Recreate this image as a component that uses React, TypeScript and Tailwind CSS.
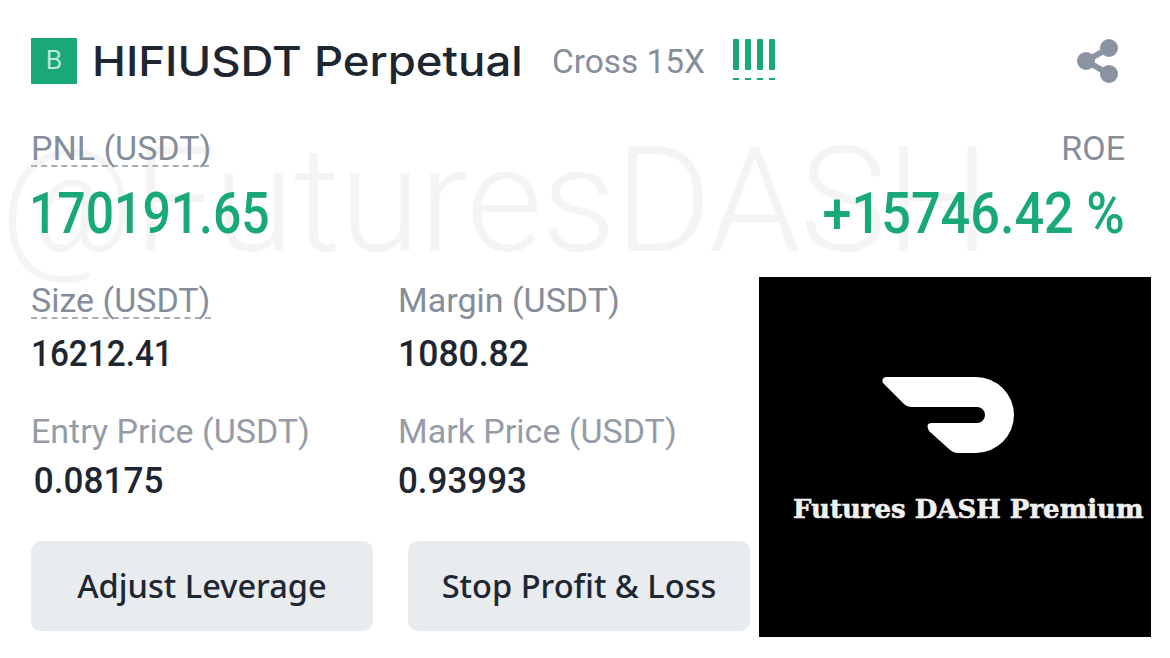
export default function App() {
  const din = "[font-family:Roboto,'Liberation_Sans',sans-serif]";
  return (
    <div className={`relative w-[1170px] h-[658px] overflow-hidden bg-white ${din}`}>
      <div className="absolute left-0 top-[128px] text-[147px] leading-[1] font-light text-[#f4f4f5] whitespace-nowrap [font-family:Roboto,sans-serif] tracking-[-1px]">@FuturesDASH</div>
      <div className="relative flex flex-col pl-[31px] pr-[45px] pt-[38px]">
        <div className="flex items-center h-[46px]">
          <div className="w-[46px] h-[46px] bg-[#19a87a] text-[#bfe8da] flex items-center justify-center text-[25px] font-normal [font-family:Inter,sans-serif]">B</div>
          <div className="ml-[15px] w-[431px] text-[41px] font-medium text-[#1e2632] leading-none whitespace-nowrap [font-family:Inter,sans-serif] origin-left scale-x-[1.11]">HIFIUSDT Perpetual</div>
          <div className="ml-[29px] mt-[2px] text-[33.4px] text-[#858d9b] leading-none whitespace-nowrap">Cross 15X</div>
          <svg className="ml-[27px] -mt-[1px]" width="44" height="44" viewBox="0 0 44 44" fill="#19a87a">
            <rect x="1" y="0" width="6" height="31" rx="1" />
            <rect x="13" y="0" width="6" height="31" rx="1" />
            <rect x="25" y="0" width="6" height="31" rx="1" />
            <rect x="37" y="0" width="6" height="31" rx="1" />
            <rect x="1" y="39" width="6" height="2" />
            <rect x="13" y="39" width="6" height="2" />
            <rect x="25" y="39" width="6" height="2" />
            <rect x="37" y="39" width="6" height="2" />
          </svg>
          <svg className="ml-auto mr-[6px]" width="42" height="44" viewBox="0 0 42 44" fill="#8a93a2">
            <circle cx="32" cy="9" r="9" />
            <circle cx="32" cy="35" r="9" />
            <circle cx="9" cy="22" r="9" />
            <path d="M9 22 L32 9 M9 22 L32 35" stroke="#8a93a2" strokeWidth="6" />
          </svg>
        </div>
        <div className="flex justify-between mt-[45px]">
          <div className="flex flex-col items-start">
            <div className="text-[34px] leading-[38px] h-[38px] text-[#858d9b] border-b-2 border-dashed border-[#a9afb9] w-[178px] whitespace-nowrap">PNL (USDT)</div>
            <div className="mt-[17px] -ml-[2px] text-[58px] leading-[58px] font-medium text-[#19a87a] origin-left scale-x-[0.86] whitespace-nowrap">170191.65</div>
          </div>
          <div className="flex flex-col items-end">
            <div className="text-[34px] leading-[38px] h-[38px] text-[#858d9b]">ROE</div>
            <div className="mt-[17px] text-[58px] leading-[58px] font-medium text-[#19a87a] origin-right scale-x-[0.9] whitespace-nowrap">+15746.42<span className="ml-[14px]">%</span></div>
          </div>
        </div>
        <div className="grid grid-cols-[367px_1fr] mt-[39px]">
          <div>
            <div className="text-[34px] leading-[38px] text-[#858d9b] whitespace-nowrap border-b-2 border-dashed border-[#a9afb9] w-[180px] h-[38px]">Size (USDT)</div>
            <div className="mt-[16px] text-[37px] leading-[38px] font-medium text-[#1e2632] origin-left scale-x-[0.9]">16212.41</div>
          </div>
          <div>
            <div className="text-[34px] leading-[38px] text-[#858d9b] whitespace-nowrap h-[38px]">Margin (USDT)</div>
            <div className="mt-[16px] text-[37px] leading-[38px] font-medium text-[#1e2632] origin-left scale-x-[0.96]">1080.82</div>
          </div>
          <div className="mt-[39px]">
            <div className="text-[34px] leading-[38px] text-[#959ca8] whitespace-nowrap h-[38px]">Entry Price (USDT)</div>
            <div className="mt-[12px] text-[37px] leading-[38px] font-medium text-[#1e2632] origin-left scale-x-[0.95] pl-[3px]">0.08175</div>
          </div>
          <div className="mt-[39px]">
            <div className="text-[34px] leading-[38px] text-[#959ca8] whitespace-nowrap h-[38px]">Mark Price (USDT)</div>
            <div className="mt-[12px] text-[37px] leading-[38px] font-medium text-[#1e2632] origin-left scale-x-[0.945]">0.93993</div>
          </div>
        </div>
        <div className="flex gap-[35px] mt-[41px]">
          <div className="w-[342px] h-[90px] rounded-[10px] bg-[#e9ecef] flex items-center justify-center text-[32.6px] font-medium text-[#1e2632] [font-family:'Noto_Sans',sans-serif] whitespace-nowrap">Adjust Leverage</div>
          <div className="w-[342px] h-[90px] rounded-[10px] bg-[#e9ecef] flex items-center justify-center text-[32.6px] font-medium text-[#1e2632] [font-family:'Noto_Sans',sans-serif] whitespace-nowrap">Stop Profit &amp; Loss</div>
        </div>
      </div>
      <div className="absolute left-[759px] top-[277px] w-[392px] h-[360px] bg-black flex flex-col items-start">
        <svg className="mt-[100px] ml-[123px]" width="132" height="76" viewBox="0 0 132 76" fill="#ffffff">
          <path d="M4 0 H94 A38 38 0 0 1 94 76 H76 Q71 76 67 72 L47 54 Q43 46 50 46 H95 A8 8 0 0 0 95 30 H30 Q25 30 22 27 L1 6 Q-1 1 4 0 Z" />
        </svg>
        <div className="mt-[41px] ml-[34px] text-[26px] leading-[30px] font-bold text-[#f0f0f0] whitespace-nowrap [font-family:'DejaVu_Serif',serif] [-webkit-text-stroke:0.6px_#f0f0f0]">Futures DASH Premium</div>
      </div>
    </div>
  );
}
